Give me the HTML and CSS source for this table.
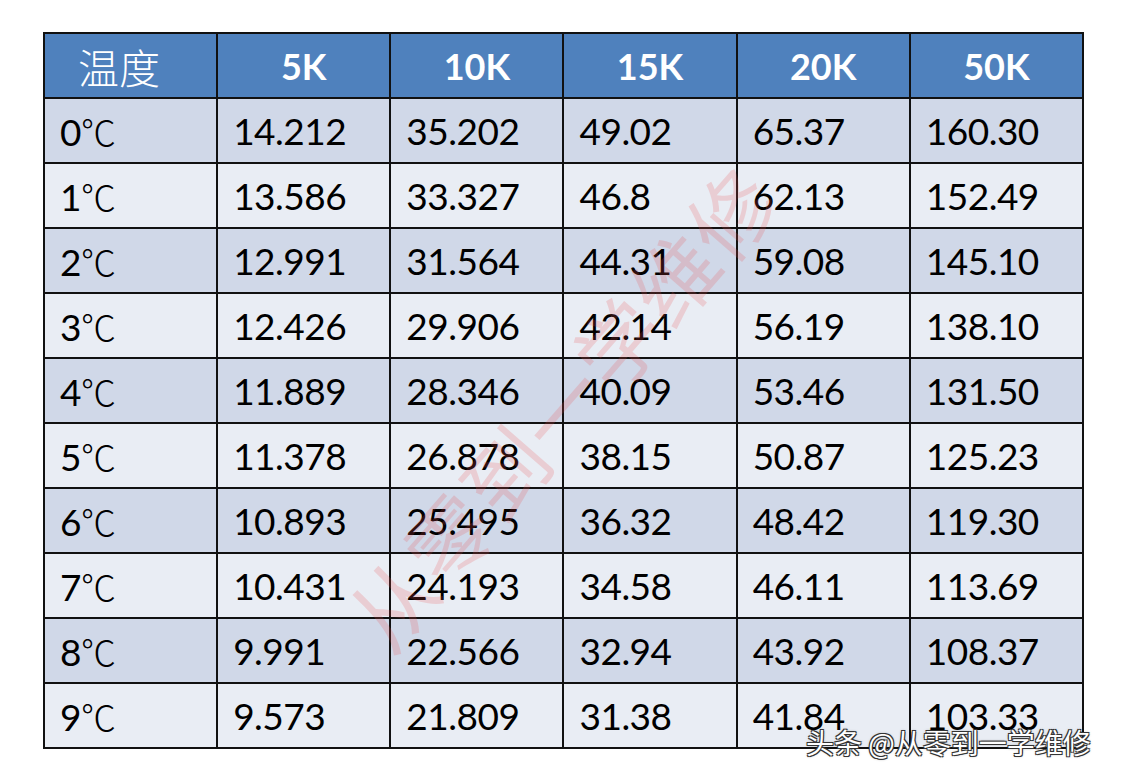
FILE: index.html
```html
<!DOCTYPE html>
<html lang="zh">
<head>
<meta charset="utf-8">
<link rel="stylesheet" href="styles.css">
</head>
<body>
<div class="page">
  <table class="grid">
    <thead>
      <tr><th class="first">温度</th><th>5K</th><th>10K</th><th>15K</th><th>20K</th><th>50K</th></tr>
    </thead>
    <tbody>
      <tr><td>0<span class="deg">℃</span></td><td>14.212</td><td>35.202</td><td>49.02</td><td>65.37</td><td>160.30</td></tr>
      <tr><td>1<span class="deg">℃</span></td><td>13.586</td><td>33.327</td><td>46.8</td><td>62.13</td><td>152.49</td></tr>
      <tr><td>2<span class="deg">℃</span></td><td>12.991</td><td>31.564</td><td>44.31</td><td>59.08</td><td>145.10</td></tr>
      <tr><td>3<span class="deg">℃</span></td><td>12.426</td><td>29.906</td><td>42.14</td><td>56.19</td><td>138.10</td></tr>
      <tr><td>4<span class="deg">℃</span></td><td>11.889</td><td>28.346</td><td>40.09</td><td>53.46</td><td>131.50</td></tr>
      <tr><td>5<span class="deg">℃</span></td><td>11.378</td><td>26.878</td><td>38.15</td><td>50.87</td><td>125.23</td></tr>
      <tr><td>6<span class="deg">℃</span></td><td>10.893</td><td>25.495</td><td>36.32</td><td>48.42</td><td>119.30</td></tr>
      <tr><td>7<span class="deg">℃</span></td><td>10.431</td><td>24.193</td><td>34.58</td><td>46.11</td><td>113.69</td></tr>
      <tr><td>8<span class="deg">℃</span></td><td>9.991</td><td>22.566</td><td>32.94</td><td>43.92</td><td>108.37</td></tr>
      <tr><td>9<span class="deg">℃</span></td><td>9.573</td><td>21.809</td><td>31.38</td><td>41.84</td><td>103.33</td></tr>
    </tbody>
  </table>
  <div class="stamp">从零到一学维修</div>
  <div class="credit">头条 @从零到一学维修</div>
</div>
</body>
</html>
```
FILE: styles.css
```css
html, body {
  margin: 0;
  padding: 0;
  background: #ffffff;
}
.page {
  position: relative;
  width: 1122px;
  height: 779px;
  overflow: hidden;
  padding: 32px 0 0 43px;
  box-sizing: border-box;
}
.grid {
  border-collapse: collapse;
  width: 1041px;
  table-layout: fixed;
  font-family: Lato, "Open Sans", "Noto Sans CJK SC", sans-serif;
  color: #000;
}
.grid th, .grid td {
  border: 2px solid #111;
  height: 65px;
  padding: 0 0 0 15px;
  box-sizing: border-box;
  text-align: left;
  vertical-align: middle;
}
.grid th {
  background: #4f81bd;
  color: #fff;
  font-weight: 700;
  font-size: 36px;
  text-align: center;
  padding: 0;
}
.grid th.first {
  text-align: left;
  padding-left: 33px;
  font-family: "Noto Sans CJK SC", sans-serif;
  font-weight: 300;
  font-size: 41px;
}
.grid td {
  font-size: 37px;
  letter-spacing: -0.5px;
}
.grid tbody tr:nth-child(odd) td { background: #d0d8e8; }
.grid tbody tr:nth-child(even) td { background: #e9edf4; }
.deg {
  font-family: "Noto Sans CJK SC", serif;
  font-weight: 300;
  font-size: 35px;
  letter-spacing: 0;
}
.stamp {
  position: absolute;
  left: 230px;
  top: 345px;
  width: 660px;
  font-family: "Noto Sans CJK SC", sans-serif;
  font-size: 84px;
  font-weight: 400;
  letter-spacing: 2px;
  color: rgba(235, 80, 80, 0.2);
  transform: rotate(-49deg);
  transform-origin: center;
  white-space: nowrap;
  text-align: center;
  pointer-events: none;
}
.credit {
  position: absolute;
  left: 806px;
  top: 722px;
  font-family: "Noto Sans CJK SC", sans-serif;
  font-size: 28px;
  color: #ffffff;
  text-shadow: -1px -1px 0 #333, 1px -1px 0 #333, -1px 1px 0 #333, 1px 1px 0 #333, 0 0 3px rgba(0,0,0,0.5);
  white-space: nowrap;
}
```
